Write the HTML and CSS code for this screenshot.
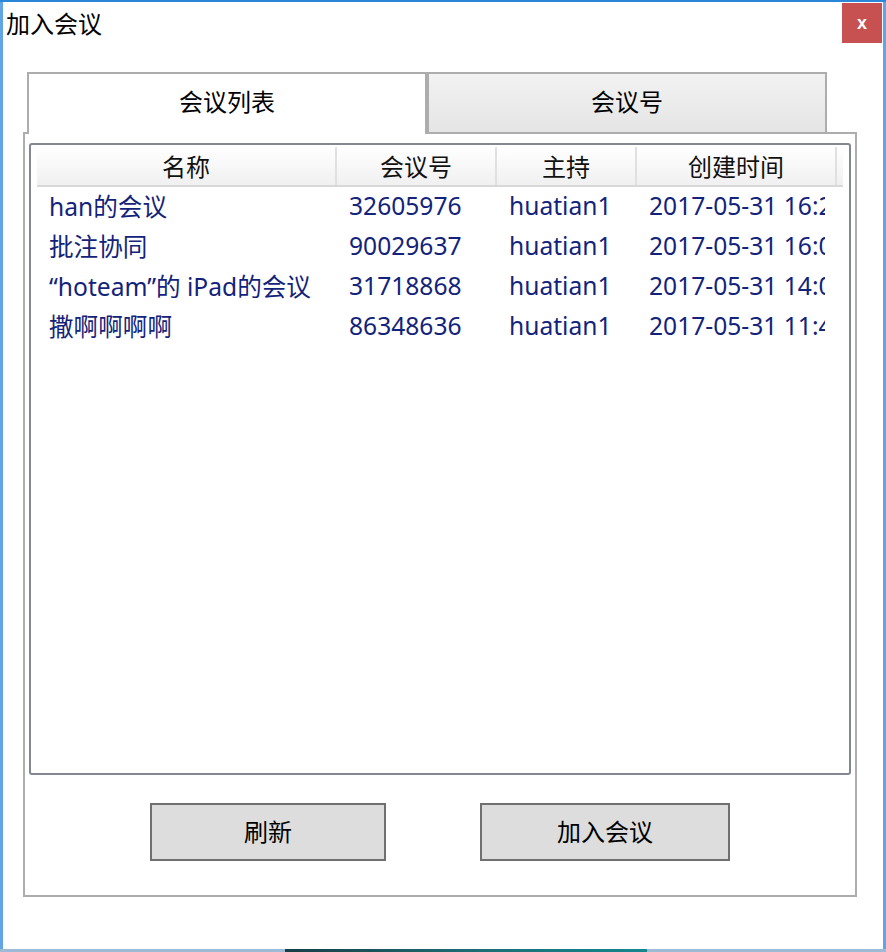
FILE: index.html
```html
<!DOCTYPE html>
<html lang="zh-CN">
<head>
    <meta charset="UTF-8">
    <meta name="viewport" content="width=device-width, initial-scale=1.0">
    <title>加入会议</title>
    <link rel="stylesheet" href="styles.css">
</head>
<body>
    <div class="window">
        <div class="titlebar">
            <span class="title">加入会议</span>
            <button class="close-button">x</button>
        </div>
        <div class="content">
            <div class="tabs">
                <div class="tab active">会议列表</div>
                <div class="tab">会议号</div>
            </div>
            <div class="panel">
                <div class="listbox">
                    <div class="list-head">
                        <div class="col">名称</div>
                        <div class="col">会议号</div>
                        <div class="col">主持</div>
                        <div class="col">创建时间</div>
                        <div class="col filler"></div>
                    </div>
                    <div class="list-row">
                        <div class="cell"><span>han的会议</span></div>
                        <div class="cell"><span>32605976</span></div>
                        <div class="cell"><span>huatian1</span></div>
                        <div class="cell"><span>2017-05-31 16:28</span></div>
                    </div>
                    <div class="list-row">
                        <div class="cell"><span>批注协同</span></div>
                        <div class="cell"><span>90029637</span></div>
                        <div class="cell"><span>huatian1</span></div>
                        <div class="cell"><span>2017-05-31 16:02</span></div>
                    </div>
                    <div class="list-row">
                        <div class="cell"><span>“hoteam”的 iPad的会议</span></div>
                        <div class="cell"><span>31718868</span></div>
                        <div class="cell"><span>huatian1</span></div>
                        <div class="cell"><span>2017-05-31 14:09</span></div>
                    </div>
                    <div class="list-row">
                        <div class="cell"><span>撒啊啊啊啊</span></div>
                        <div class="cell"><span>86348636</span></div>
                        <div class="cell"><span>huatian1</span></div>
                        <div class="cell"><span>2017-05-31 11:45</span></div>
                    </div>
                </div>
                <div class="actions">
                    <button class="action-button refresh">刷新</button>
                    <button class="action-button join">加入会议</button>
                </div>
            </div>
        </div>
    </div>
    <div class="desktop-strip">
        <div class="taskbar-piece"></div>
    </div>
</body>
</html>
```

FILE: styles.css
```css
/* Reset some default styles */
* {
    box-sizing: border-box;
    margin: 0;
    padding: 0;
}

body {
    font-family: 'Noto Sans', 'Noto Sans CJK SC', sans-serif;
    background: linear-gradient(#2a86d8 0, #2a86d8 2px, #62a4e4 2px);
    height: 952px;
    overflow: hidden;
    color: #000;
}

.window {
    width: 880px;
    height: 947px;
    margin: 2px 0 0 3px;
    background-color: #fff;
}

.titlebar {
    display: flex;
    justify-content: space-between;
    align-items: flex-start;
    height: 41px;
    padding-top: 1px;
}

.title {
    font-family: 'Noto Sans CJK SC', sans-serif;
    font-size: 24px;
    line-height: 40px;
    padding-left: 3px;
}

.close-button {
    width: 40px;
    height: 40px;
    margin-right: 1px;
    border: none;
    background-color: #c75050;
    color: #fff;
    font-family: 'Liberation Sans', sans-serif;
    font-size: 18px;
    font-weight: 700;
}

.content {
    padding-left: 20px;
}

.tabs {
    display: flex;
    align-items: flex-start;
    margin: 29px 0 0 4px;
}

.tab {
    width: 400px;
    height: 60px;
    display: flex;
    justify-content: center;
    align-items: center;
    padding-bottom: 5px;
    border: 2px solid #adadad;
    border-bottom: none;
    background: linear-gradient(#f2f2f2, #e5e5e5);
    font-family: 'Noto Sans CJK SC', sans-serif;
    font-size: 24px;
}

.tab.active {
    position: relative;
    z-index: 1;
    height: 62px;
    margin-bottom: -2px;
    padding-bottom: 7px;
    background: #fff;
}

.panel {
    width: 834px;
    height: 765px;
    border: 2px solid #adadad;
    padding: 9px 4px 0;
}

.listbox {
    height: 632px;
    border: 2px solid #828790;
    border-radius: 3px;
    padding: 2px 6px 0;
}

.list-head,
.list-row {
    display: grid;
    grid-template-columns: 300px 160px 140px 200px 5px;
}

.list-head {
    height: 40px;
    border-bottom: 2px solid #d8d8d8;
    background: linear-gradient(#fff, #f0f0f0);
}

.list-head .col {
    display: flex;
    justify-content: center;
    align-items: center;
    padding-bottom: 2px;
    border-right: 2px solid #e0e0e0;
    font-family: 'Noto Sans CJK SC', sans-serif;
    font-size: 24px;
    color: #111;
}

.list-head .filler {
    border-right: none;
}

.list-row {
    height: 40px;
    align-items: center;
    padding-bottom: 4px;
    font-size: 24.6px;
    color: #13237a;
}

.list-row .cell {
    padding: 0 12px;
}

.list-row .cell span {
    display: block;
    overflow: hidden;
    white-space: nowrap;
}

.actions {
    display: flex;
    justify-content: center;
    gap: 94px;
    margin-top: 28px;
}

.action-button {
    height: 58px;
    padding-bottom: 4px;
    border: 2px solid #707070;
    background-color: #dddddd;
    font-family: 'Noto Sans CJK SC', sans-serif;
    font-size: 24px;
    color: #000;
}

.refresh {
    width: 236px;
}

.join {
    width: 250px;
}

.desktop-strip {
    height: 3px;
    background-color: #9dbad6;
    padding-left: 285px;
}

.taskbar-piece {
    width: 362px;
    height: 3px;
    background: linear-gradient(90deg, #173f45, #1d6b73, #14878f);
}
```
